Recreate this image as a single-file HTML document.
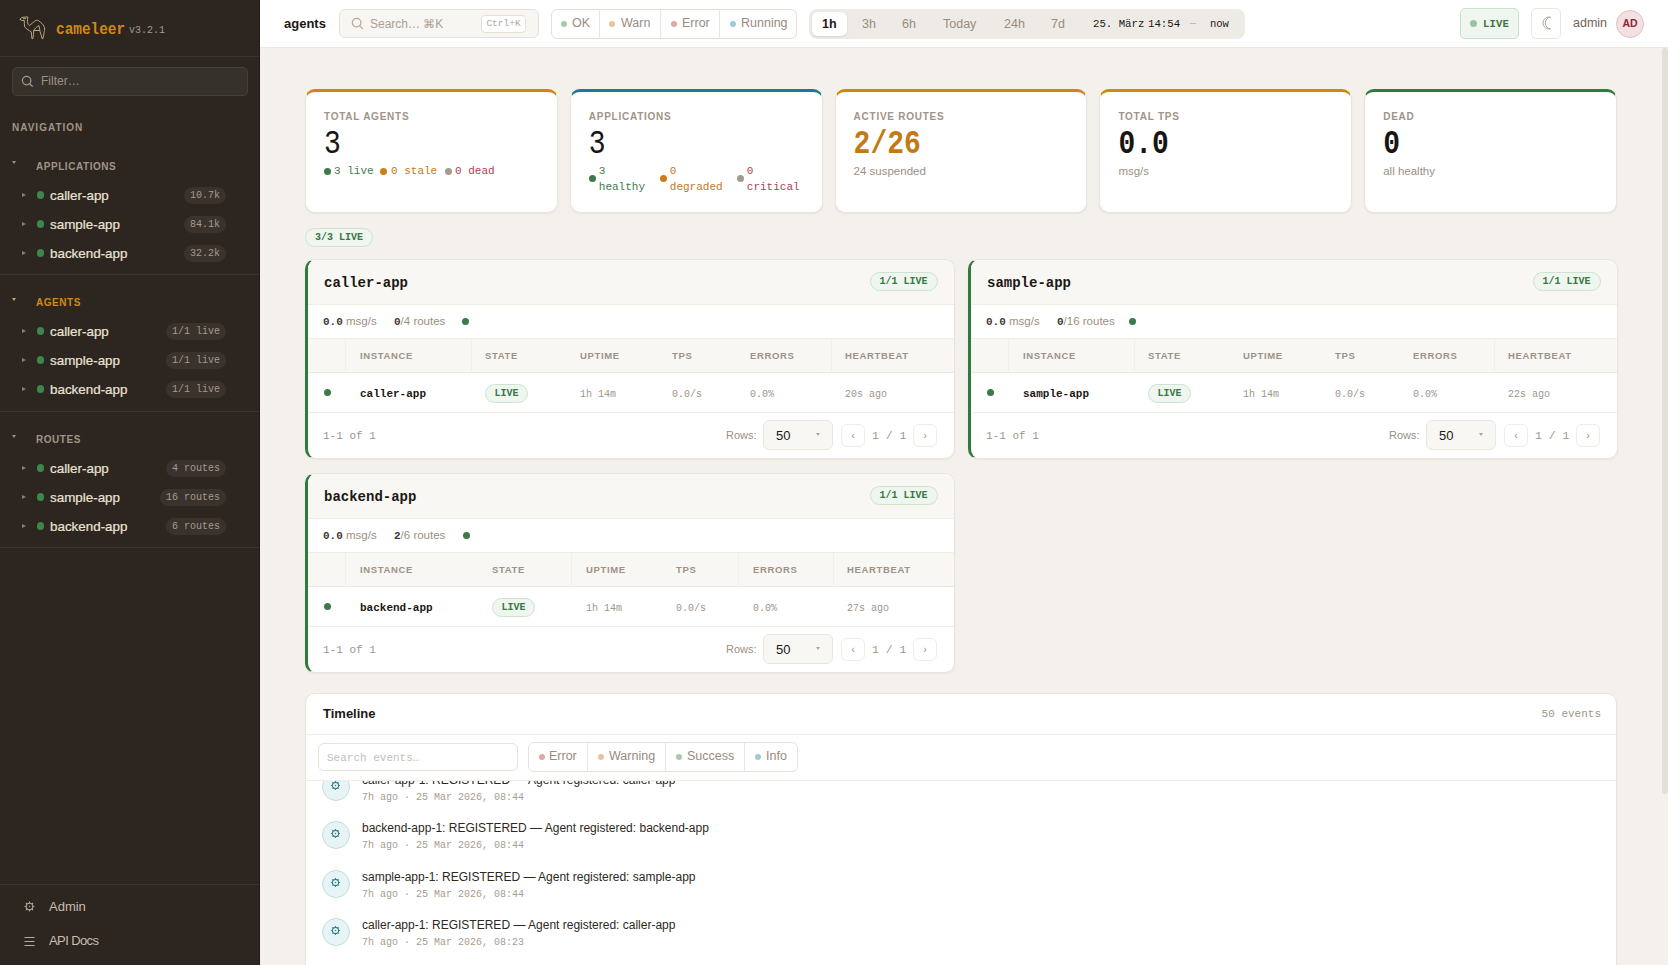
<!DOCTYPE html>
<html><head><meta charset="utf-8">
<style>
*{box-sizing:border-box;margin:0;padding:0}
html,body{width:1668px;height:965px;overflow:hidden;background:#f4f1ec;font-family:"Liberation Sans",sans-serif;color:#1c1714}
.mono{font-family:"Liberation Mono",monospace}
.abs{position:absolute}
/* sidebar */
#sb{position:absolute;left:0;top:0;width:260px;height:965px;background:#2c2520;border-right:1px solid #221c18}
.sep{position:absolute;left:0;width:259px;height:1px;background:#3b342e}
.sec{position:absolute;left:36px;font-size:10px;font-weight:bold;letter-spacing:0.55px;color:#a09487;line-height:12px}
.caret{position:absolute;left:12px;width:0;height:0;border-left:2px solid transparent;border-right:2px solid transparent;border-top:3px solid #9a8f84}
.item{position:absolute;left:0;width:259px;height:29px}
.item .tri{position:absolute;left:22px;top:12px;width:0;height:0;border-top:2.5px solid transparent;border-bottom:2.5px solid transparent;border-left:4px solid #8a7f75}
.item .dot{position:absolute;left:36.7px;top:10.3px;width:7.5px;height:7.5px;border-radius:50%;background:#3d874d}
.item .nm{position:absolute;left:50px;top:7px;font-size:13.4px;line-height:15px;color:#ece3d6;-webkit-text-stroke:0.2px #ece3d6}
.item .bd{position:absolute;right:33px;top:6px;height:17px;padding:0 6px;border-radius:9px;background:#3a322c;font-family:"Liberation Mono",monospace;font-size:10px;line-height:17px;color:#a49a8e}
/* topbar */
#tb{position:absolute;left:260px;top:0;width:1408px;height:48px;background:#fff;border-bottom:1px solid #ebe7e1}
/* content */
#ct{position:absolute;left:281px;top:69px;width:1361px;height:900px;border:1px solid #f3f0eb}
.kpi{position:absolute;top:89px;height:124px;width:252.8px;background:#fff;border:1px solid #e9e4dd;border-top:3px solid #cf850f;border-radius:10px;box-shadow:0 1px 2px rgba(60,40,20,.07)}
.kpi .bar{display:none}
.kpi .lab{position:absolute;left:18px;top:19px;font-size:10px;font-weight:bold;letter-spacing:0.75px;color:#a09488;line-height:12px}
.kpi .val{position:absolute;left:18px;top:39px;transform:scaleY(1.16);transform-origin:0 100%;font-family:"Liberation Mono",monospace;font-size:28px;font-weight:bold;line-height:32px;color:#1a1512}
.kpi .sub{position:absolute;left:18px;top:72px;font-size:11.5px;color:#9b9084;line-height:14px}

.grp{position:absolute;background:#fff;border:1px solid #e9e4dd;border-left:3px solid #2f7a3d;border-radius:10px;box-shadow:0 1px 2px rgba(60,40,20,.06);overflow:hidden}
.grp .hd{position:absolute;left:0;right:0;top:0;height:45px;background:#f9f7f4;border-bottom:1px solid #f0ece6}
.grp .ttl{position:absolute;left:16px;top:15px;font-family:"Liberation Mono",monospace;font-size:14px;font-weight:bold;line-height:16px;color:#1c1714}
.grp .lv{position:absolute;right:16px;top:12px;height:19px;width:68px;text-align:center;border:1px solid #cde3cf;background:#eff6ef;border-radius:10px;font-family:"Liberation Mono",monospace;font-size:10px;font-weight:bold;line-height:18px;color:#3a7845}
.grp .met{position:absolute;top:54px;font-size:11.5px;line-height:14px;color:#9b9084;white-space:pre}
.grp .met b{font-family:"Liberation Mono",monospace;font-weight:bold;color:#433b34;font-size:11px}
.grp .th{position:absolute;left:0;right:0;top:78px;height:35px;background:#f9f7f4;border-top:1px solid #f0ece6;border-bottom:1px solid #ebe7e1}
.grp .th span{position:absolute;top:11px;font-size:9.5px;font-weight:bold;letter-spacing:0.65px;color:#9d9286;line-height:12px}
.grp .th i{position:absolute;top:0;width:1px;height:34px;background:#f2efea}
.grp .tr{position:absolute;left:0;right:0;top:113px;height:40px;border-bottom:1px solid #f0ece6}
.grp .tr .d{position:absolute;left:16px;top:16px;width:7px;height:7px;border-radius:50%;background:#3c7a49}
.grp .tr .n{position:absolute;top:14px;font-family:"Liberation Mono",monospace;font-size:11px;font-weight:bold;line-height:14px;color:#1c1714}
.grp .tr .p{position:absolute;top:11px;height:19px;width:43px;border:1px solid #cde3cf;background:#eff6ef;border-radius:10px;font-family:"Liberation Mono",monospace;font-size:10px;font-weight:bold;line-height:17px;text-align:center;color:#3a7845}
.grp .tr .m{position:absolute;top:16px;font-family:"Liberation Mono",monospace;font-size:10px;line-height:12px;color:#a0968b}
.grp .ft{position:absolute;left:15px;top:169px;font-family:"Liberation Mono",monospace;font-size:11px;line-height:14px;color:#9f958a}
.grp .rows{position:absolute;top:168px;font-size:11px;line-height:14px;color:#9b9084}
.grp .sel{position:absolute;top:160px;width:70px;height:30px;background:#f9f7f4;border:1px solid #ebe6df;border-radius:6px}
.grp .sel span{position:absolute;left:12px;top:7px;font-size:13px;line-height:15px;color:#1c1714}
.grp .sel i{position:absolute;right:12px;top:12px;width:0;height:0;border-left:2px solid transparent;border-right:2px solid transparent;border-top:3px solid #b0a69b}
.grp .pb{position:absolute;top:164px;width:24px;height:23px;border:1px solid #f0ece6;border-radius:6px;background:#fff;font-size:11px;line-height:20px;text-align:center;color:#a0968b}
.grp .pg{position:absolute;top:169px;font-family:"Liberation Mono",monospace;font-size:11.5px;line-height:14px;color:#9f958a;white-space:pre}

.tl{position:absolute;left:305px;top:693px;width:1312px;height:290px;background:#fff;border:1px solid #e9e4dd;border-radius:10px;box-shadow:0 1px 2px rgba(60,40,20,.06);overflow:hidden}
.ev{position:absolute;left:0;width:1300px;height:48px}
.ev .ic{position:absolute;left:15.8px;top:0px;width:28px;height:28px;border-radius:50%;background:#e7f3f5;border:1px solid #bfdfe4}
.ev .ic svg{position:absolute;left:7.6px;top:6.2px}
.ev .t{position:absolute;left:56px;top:0px;font-size:12px;line-height:14px;color:#2e2823;white-space:pre}
.ev .mt{position:absolute;left:56px;top:19px;font-family:"Liberation Mono",monospace;font-size:10px;line-height:12px;color:#a89d90;white-space:pre}
</style></head><body>

<div id="sb">
  <svg class="abs" style="left:15px;top:10px" width="40" height="35" viewBox="0 0 40 35" fill="none" stroke="#c4ae7e" stroke-width="0.95" stroke-linejoin="round" stroke-linecap="round">
    <path d="M5.3 9.6 C5.4 8.3 6.4 7.4 7.8 7.3 L12.8 6.9 L12.5 9.8 C12.4 12 12.5 14.4 14.2 15.5 C16.2 14.6 19 11.2 21.2 10.3 C22.3 10 23.3 10.4 24.1 11.1 C26.1 12.7 28.1 14.3 29 16.3 C29.8 18.1 29.9 20 29.2 21.6 C28.9 23.6 28.7 26.2 27.9 28.6 L27 28.6 C26.5 26.4 25.9 24 25.1 21.8 C24.8 20 24.6 18 23.9 15.6 C22 16.6 19.6 18.6 18.8 20.6 C18.5 23.2 18.4 26 18 28.6 L16.9 28.6 C16.6 26.2 16.6 23.6 16.2 21.8 C14.3 20.5 11.3 19 9.7 17 C9.2 15 9.3 12.6 9.3 10.4 L6.9 10.5 C6.1 10.5 5.4 10.2 5.3 9.6 Z"/>
    <path d="M8.3 8.7 L10.6 8.6"/>
    <path d="M18.8 20.5 L24.6 20.5"/>
  </svg>
  <div class="abs mono" style="left:56px;top:20px;font-size:14.4px;font-weight:bold;color:#d28814;line-height:20px;transform:scaleY(1.14);transform-origin:0 70%">cameleer</div>
  <div class="abs mono" style="left:129px;top:24px;font-size:10px;color:#a39a8f;line-height:14px">v3.2.1</div>
  <div class="sep" style="top:56px"></div>

  <div class="abs" style="left:12px;top:67px;width:236px;height:29px;background:#37312b;border:1px solid #45403a;border-radius:5px"></div>
  <svg class="abs" style="left:21px;top:75px" width="13" height="13" viewBox="0 0 13 13" fill="none" stroke="#a09589" stroke-width="1.3"><circle cx="5.6" cy="5.6" r="4.2"/><path d="M8.7 8.7 L11.3 11.3" stroke-linecap="round"/></svg>
  <div class="abs" style="left:41px;top:74px;font-size:12px;line-height:14px;color:#9d9287">Filter…</div>
  <div class="abs" style="left:12px;top:123px;font-size:10px;font-weight:bold;letter-spacing:1px;color:#a09487;line-height:10px">NAVIGATION</div>

  <div class="caret" style="top:161px"></div>
  <div class="sec" style="top:161px">APPLICATIONS</div>
  <div class="item" style="top:181px"><i class="tri"></i><i class="dot"></i><span class="nm">caller-app</span><span class="bd">10.7k</span></div>
  <div class="item" style="top:210px"><i class="tri"></i><i class="dot"></i><span class="nm">sample-app</span><span class="bd">84.1k</span></div>
  <div class="item" style="top:239px"><i class="tri"></i><i class="dot"></i><span class="nm">backend-app</span><span class="bd">32.2k</span></div>
  <div class="sep" style="top:274px"></div>

  <div class="caret" style="top:298px;border-top-color:#c9a36a"></div>
  <div class="sec" style="top:297px;color:#d38a14">AGENTS</div>
  <div class="item" style="top:317px"><i class="tri"></i><i class="dot"></i><span class="nm">caller-app</span><span class="bd">1/1 live</span></div>
  <div class="item" style="top:346px"><i class="tri"></i><i class="dot"></i><span class="nm">sample-app</span><span class="bd">1/1 live</span></div>
  <div class="item" style="top:375px"><i class="tri"></i><i class="dot"></i><span class="nm">backend-app</span><span class="bd">1/1 live</span></div>
  <div class="sep" style="top:411px"></div>

  <div class="caret" style="top:435px"></div>
  <div class="sec" style="top:434px">ROUTES</div>
  <div class="item" style="top:454px"><i class="tri"></i><i class="dot"></i><span class="nm">caller-app</span><span class="bd">4 routes</span></div>
  <div class="item" style="top:483px"><i class="tri"></i><i class="dot"></i><span class="nm">sample-app</span><span class="bd">16 routes</span></div>
  <div class="item" style="top:512px"><i class="tri"></i><i class="dot"></i><span class="nm">backend-app</span><span class="bd">6 routes</span></div>
  <div class="sep" style="top:547px"></div>

  <div class="sep" style="top:884px"></div>
  <svg class="abs" style="left:24px;top:901px" width="11" height="11" viewBox="0 0 11 11" fill="none" stroke="#b5aa9d" stroke-width="1.1"><circle cx="5.5" cy="5.5" r="3.3"/><circle cx="5.5" cy="5.5" r="0.7" fill="#b5aa9d" stroke="none"/><path d="M5.5 0.6V1.9M5.5 9.1V10.4M0.6 5.5H1.9M9.1 5.5H10.4M2 2L2.9 2.9M8.1 8.1L9 9M2 9L2.9 8.1M8.1 2.9L9 2"/></svg>
  <div class="abs" style="left:49px;top:899px;font-size:13px;line-height:15px;color:#c9bdaf">Admin</div>
  <svg class="abs" style="left:24px;top:936px" width="11" height="11" viewBox="0 0 11 11" stroke="#b5aa9d" stroke-width="1.1"><path d="M0.5 1.5H10.5M0.5 5.5H10.5M0.5 9.5H10.5"/></svg>
  <div class="abs" style="left:49px;top:933px;font-size:13px;line-height:15px;color:#c9bdaf;letter-spacing:-0.6px">API Docs</div>
</div>

<div id="tb">
  <div class="abs" style="left:24px;top:16px;font-size:13px;font-weight:bold;line-height:16px;color:#1c1714">agents</div>
  <div class="abs" style="left:79px;top:9px;width:200px;height:29px;background:#f8f6f2;border:1px solid #e6e0d8;border-radius:6px"></div>
  <svg class="abs" style="left:91px;top:17px" width="13" height="13" viewBox="0 0 13 13" fill="none" stroke="#b3a89c" stroke-width="1.2"><circle cx="5.6" cy="5.6" r="4.3"/><path d="M8.8 8.8 L11.6 11.6" stroke-linecap="round"/></svg>
  <div class="abs" style="left:110px;top:17px;font-size:12px;line-height:15px;color:#aaa094">Search… &#8984;K</div>
  <div class="abs mono" style="left:221px;top:15px;width:45px;height:18px;border:1px solid #e6e0d8;border-radius:4px;background:#fff;font-size:9.5px;line-height:16px;text-align:center;color:#b1a79b">Ctrl+K</div>

  <div class="abs" style="left:291px;top:9px;width:246px;height:30px;border:1px solid #e6e0d8;border-radius:6px;background:#fff"></div>
  <div class="abs" style="left:339px;top:10px;width:1px;height:28px;background:#ebe6df"></div>
  <div class="abs" style="left:400px;top:10px;width:1px;height:28px;background:#ebe6df"></div>
  <div class="abs" style="left:459px;top:10px;width:1px;height:28px;background:#ebe6df"></div>
  <i class="abs" style="left:301px;top:20.5px;width:6px;height:6px;border-radius:50%;background:#a9c9a9"></i>
  <div class="abs" style="left:312px;top:16px;font-size:12.5px;line-height:15px;color:#978b7f">OK</div>
  <i class="abs" style="left:349px;top:20.5px;width:6px;height:6px;border-radius:50%;background:#e8c49a"></i>
  <div class="abs" style="left:361px;top:16px;font-size:12.5px;line-height:15px;color:#978b7f">Warn</div>
  <i class="abs" style="left:411px;top:20.5px;width:6px;height:6px;border-radius:50%;background:#e6a5a5"></i>
  <div class="abs" style="left:422px;top:16px;font-size:12.5px;line-height:15px;color:#978b7f">Error</div>
  <i class="abs" style="left:470px;top:20.5px;width:6px;height:6px;border-radius:50%;background:#9fcad6"></i>
  <div class="abs" style="left:481px;top:16px;font-size:12.5px;line-height:15px;color:#978b7f">Running</div>

  <div class="abs" style="left:549px;top:9px;width:436px;height:30px;background:#eeebe6;border-radius:8px"></div>
  <div class="abs" style="left:552px;top:12px;width:35px;height:24px;background:#fff;border-radius:6px;box-shadow:0 1px 2px rgba(60,40,20,.12)"></div>
  <div class="abs" style="left:562px;top:17px;font-size:12.5px;font-weight:bold;line-height:15px;color:#1c1714">1h</div>
  <div class="abs" style="left:602px;top:17px;font-size:12.5px;line-height:15px;color:#978b7f">3h</div>
  <div class="abs" style="left:642px;top:17px;font-size:12.5px;line-height:15px;color:#978b7f">6h</div>
  <div class="abs" style="left:683px;top:17px;font-size:12.5px;line-height:15px;color:#978b7f">Today</div>
  <div class="abs" style="left:744px;top:17px;font-size:12.5px;line-height:15px;color:#978b7f">24h</div>
  <div class="abs" style="left:791px;top:17px;font-size:12.5px;line-height:15px;color:#978b7f">7d</div>
  <div class="abs mono" style="left:833px;top:17px;font-size:10.7px;line-height:14px;color:#1c1714;white-space:pre">25. März</div>
  <div class="abs mono" style="left:888px;top:17px;font-size:10.7px;line-height:14px;color:#1c1714;white-space:pre">14:54</div>
  <div class="abs mono" style="left:930px;top:17px;font-size:10px;line-height:14px;color:#b9afa4">—</div>
  <div class="abs mono" style="left:950px;top:17px;font-size:10.5px;line-height:14px;color:#1c1714">now</div>

  <div class="abs" style="left:1200px;top:8px;width:59px;height:31px;background:#eff6ef;border:1px solid #c9e0cb;border-radius:5px"></div>
  <i class="abs" style="left:1210px;top:20px;width:7px;height:7px;border-radius:50%;background:#9cc3a0"></i>
  <div class="abs mono" style="left:1223px;top:17px;font-size:10.5px;font-weight:bold;line-height:14px;color:#3c7446;letter-spacing:0.2px">LIVE</div>
  <div class="abs" style="left:1271px;top:8px;width:30px;height:31px;background:#fff;border:1px solid #ebe6df;border-radius:5px"></div>
  <svg class="abs" style="left:1281px;top:16px" width="12" height="14" viewBox="0 0 12 14" fill="none" stroke="#a89d92" stroke-width="0.9"><path d="M9.5 1.2 A6 6 0 1 0 9.5 12.8 A5.2 5.8 0 0 1 9.5 1.2 Z"/></svg>
  <div class="abs" style="left:1313px;top:16px;font-size:12.5px;line-height:15px;color:#6e635a">admin</div>
  <div class="abs" style="left:1356px;top:10px;width:28px;height:28px;border-radius:50%;background:#f3e0e1;border:1px solid #e4bfc3;font-size:10.5px;font-weight:bold;line-height:25px;text-align:center;color:#8d2535">AD</div>
</div>
<div id="ct"></div>

<div class="kpi" style="left:305px"><div class="bar" style="background:#cf850f"></div>
  <div class="lab">TOTAL AGENTS</div><div class="val" style="font-weight:normal">3</div>
  <div class="abs mono" style="left:18px;top:72px;font-size:11px;line-height:14px;white-space:pre">
<i class="abs" style="left:0;top:4px;width:7px;height:7px;border-radius:50%;background:#3c7a49"></i><span class="abs" style="left:10px;top:0;color:#3f7a4b">3 live</span><i class="abs" style="left:56px;top:4px;width:7px;height:7px;border-radius:50%;background:#cd7d1a"></i><span class="abs" style="left:67px;top:0;color:#c07a1f">0 stale</span><i class="abs" style="left:121px;top:4px;width:7px;height:7px;border-radius:50%;background:#a39b92"></i><span class="abs" style="left:131px;top:0;color:#ad4254">0 dead</span>
  </div>
</div>
<div class="kpi" style="left:569.8px;border-top-color:#177e8c"><div class="bar"></div>
  <div class="lab">APPLICATIONS</div><div class="val" style="font-weight:normal">3</div>
  <div class="abs mono" style="left:18px;top:71px;font-size:11px;line-height:16px;white-space:pre;width:230px;height:40px">
<i class="abs" style="left:0;top:12px;width:7px;height:7px;border-radius:50%;background:#3c7a49"></i><span class="abs" style="left:10px;top:0;color:#3f7a4b">3<br>healthy</span><i class="abs" style="left:71px;top:12px;width:7px;height:7px;border-radius:50%;background:#cd7d1a"></i><span class="abs" style="left:81px;top:0;color:#c07a1f">0<br>degraded</span><i class="abs" style="left:148px;top:12px;width:7px;height:7px;border-radius:50%;background:#a39b92"></i><span class="abs" style="left:158px;top:0;color:#ad4254">0<br>critical</span>
  </div>
</div>
<div class="kpi" style="left:834.6px"><div class="bar" style="background:#cf850f"></div>
  <div class="lab">ACTIVE ROUTES</div><div class="val" style="color:#c27a16">2/26</div>
  <div class="sub">24 suspended</div>
</div>
<div class="kpi" style="left:1099.4px;border-top-color:#d0890f"><div class="bar"></div>
  <div class="lab">TOTAL TPS</div><div class="val">0.0</div>
  <div class="sub">msg/s</div>
</div>
<div class="kpi" style="left:1364.2px;border-top-color:#2f7a3d"><div class="bar"></div>
  <div class="lab">DEAD</div><div class="val">0</div>
  <div class="sub">all healthy</div>
</div>
<div class="grp" style="left:305px;top:259px;width:649.5px;height:200px">
  <div class="hd"><span class="ttl">caller-app</span><span class="lv">1/1 LIVE</span></div>
  <div class="met" style="left:15px"><b>0.0</b> msg/s</div>
  <div class="met" style="left:86px"><b>0</b>/4 routes</div>
  <i class="abs" style="left:154px;top:58px;width:7px;height:7px;border-radius:50%;background:#3c7a49"></i>
  <div class="th"><i style="left:37px"></i><i style="left:163px"></i><i style="left:523px"></i><span style="left:52px">INSTANCE</span><span style="left:177px">STATE</span><span style="left:272px">UPTIME</span><span style="left:364px">TPS</span><span style="left:442px">ERRORS</span><span style="left:537px">HEARTBEAT</span></div>
  <div class="tr"><i class="d"></i><span class="n" style="left:52px">caller-app</span><span class="p" style="left:177px">LIVE</span><span class="m" style="left:272px">1h 14m</span><span class="m" style="left:364px">0.0/s</span><span class="m" style="left:442px">0.0%</span><span class="m" style="left:537px">20s ago</span></div>
  <div class="ft">1-1 of 1</div>
  <div class="rows" style="left:418px">Rows:</div>
  <div class="sel" style="left:455px"><span>50</span><i></i></div>
  <div class="pb" style="left:533px">&#8249;</div>
  <div class="pg" style="left:564px">1 / 1</div>
  <div class="pb" style="left:605px">&#8250;</div>
</div>
<div class="grp" style="left:968px;top:259px;width:649.5px;height:200px">
  <div class="hd"><span class="ttl">sample-app</span><span class="lv">1/1 LIVE</span></div>
  <div class="met" style="left:15px"><b>0.0</b> msg/s</div>
  <div class="met" style="left:86px"><b>0</b>/16 routes</div>
  <i class="abs" style="left:158px;top:58px;width:7px;height:7px;border-radius:50%;background:#3c7a49"></i>
  <div class="th"><i style="left:37px"></i><i style="left:163px"></i><i style="left:523px"></i><span style="left:52px">INSTANCE</span><span style="left:177px">STATE</span><span style="left:272px">UPTIME</span><span style="left:364px">TPS</span><span style="left:442px">ERRORS</span><span style="left:537px">HEARTBEAT</span></div>
  <div class="tr"><i class="d"></i><span class="n" style="left:52px">sample-app</span><span class="p" style="left:177px">LIVE</span><span class="m" style="left:272px">1h 14m</span><span class="m" style="left:364px">0.0/s</span><span class="m" style="left:442px">0.0%</span><span class="m" style="left:537px">22s ago</span></div>
  <div class="ft">1-1 of 1</div>
  <div class="rows" style="left:418px">Rows:</div>
  <div class="sel" style="left:455px"><span>50</span><i></i></div>
  <div class="pb" style="left:533px">&#8249;</div>
  <div class="pg" style="left:564px">1 / 1</div>
  <div class="pb" style="left:605px">&#8250;</div>
</div>
<div class="grp" style="left:305px;top:473px;width:649.5px;height:200px">
  <div class="hd"><span class="ttl">backend-app</span><span class="lv">1/1 LIVE</span></div>
  <div class="met" style="left:15px"><b>0.0</b> msg/s</div>
  <div class="met" style="left:86px"><b>2</b>/6 routes</div>
  <i class="abs" style="left:155px;top:58px;width:7px;height:7px;border-radius:50%;background:#3c7a49"></i>
  <div class="th"><i style="left:37px"></i><i style="left:263px"></i><i style="left:430px"></i><i style="left:525px"></i><span style="left:52px">INSTANCE</span><span style="left:184px">STATE</span><span style="left:278px">UPTIME</span><span style="left:368px">TPS</span><span style="left:445px">ERRORS</span><span style="left:539px">HEARTBEAT</span></div>
  <div class="tr"><i class="d"></i><span class="n" style="left:52px">backend-app</span><span class="p" style="left:184px">LIVE</span><span class="m" style="left:278px">1h 14m</span><span class="m" style="left:368px">0.0/s</span><span class="m" style="left:445px">0.0%</span><span class="m" style="left:539px">27s ago</span></div>
  <div class="ft">1-1 of 1</div>
  <div class="rows" style="left:418px">Rows:</div>
  <div class="sel" style="left:455px"><span>50</span><i></i></div>
  <div class="pb" style="left:533px">&#8249;</div>
  <div class="pg" style="left:564px">1 / 1</div>
  <div class="pb" style="left:605px">&#8250;</div>
</div>
<div class="abs mono" style="left:305px;top:228px;width:68px;height:19px;border:1px solid #cde3cf;background:#eff6ef;border-radius:10px;font-size:10px;font-weight:bold;line-height:18px;text-align:center;color:#3a7845">3/3 LIVE</div>


<div class="tl">
  <div class="abs" style="left:17px;top:12px;font-size:13px;font-weight:bold;line-height:16px;color:#1c1714">Timeline</div>
  <div class="abs mono" style="right:15px;top:13px;font-size:11px;line-height:14px;color:#a0968b">50 events</div>
  <div class="abs" style="left:0;right:0;top:40px;height:1px;background:#f1ede8"></div>
  <div class="abs" style="left:12px;top:49px;width:200px;height:28px;border:1px solid #e8e2da;border-radius:6px;background:#fff"></div>
  <div class="abs mono" style="left:21px;top:57px;font-size:11px;line-height:14px;color:#c8beb3">Search events…</div>
  <div class="abs" style="left:222px;top:48px;width:270px;height:30px;border:1px solid #e8e2da;border-radius:6px;background:#fff"></div>
  <div class="abs" style="left:281px;top:49px;width:1px;height:28px;background:#ece7e0"></div>
  <div class="abs" style="left:359px;top:49px;width:1px;height:28px;background:#ece7e0"></div>
  <div class="abs" style="left:438px;top:49px;width:1px;height:28px;background:#ece7e0"></div>
  <i class="abs" style="left:233px;top:60px;width:6px;height:6px;border-radius:50%;background:#e6a5a5"></i>
  <div class="abs" style="left:243px;top:55px;font-size:12.5px;line-height:15px;color:#978b7f">Error</div>
  <i class="abs" style="left:292px;top:60px;width:6px;height:6px;border-radius:50%;background:#e8c49a"></i>
  <div class="abs" style="left:303px;top:55px;font-size:12.5px;line-height:15px;color:#978b7f">Warning</div>
  <i class="abs" style="left:370px;top:60px;width:6px;height:6px;border-radius:50%;background:#a9c9a9"></i>
  <div class="abs" style="left:381px;top:55px;font-size:12.5px;line-height:15px;color:#978b7f">Success</div>
  <i class="abs" style="left:449px;top:60px;width:6px;height:6px;border-radius:50%;background:#9fcad6"></i>
  <div class="abs" style="left:460px;top:55px;font-size:12.5px;line-height:15px;color:#978b7f">Info</div>
  <div class="abs" style="left:0;right:0;top:86px;height:250px;overflow:hidden;border-top:1px solid #f1ede8">
<div class="ev" style="top:-8px"><div class="ic"><svg width="11" height="11" viewBox="0 0 11 11" fill="none" stroke="#2f8593" stroke-width="1.15"><circle cx="5.5" cy="5.5" r="3.1"/><circle cx="5.5" cy="5.5" r="0.75" fill="#2f8593" stroke="none"/><path d="M5.5 1V2.2M5.5 8.8V10M1 5.5H2.2M8.8 5.5H10M2.3 2.3L3.1 3.1M7.9 7.9L8.7 8.7M2.3 8.7L3.1 7.9M7.9 3.1L8.7 2.3" stroke-width="1"/></svg></div><div class="t">caller-app-1: REGISTERED — Agent registered: caller-app</div><div class="mt">7h ago · 25 Mar 2026, 08:44</div></div><div class="ev" style="top:40px"><div class="ic"><svg width="11" height="11" viewBox="0 0 11 11" fill="none" stroke="#2f8593" stroke-width="1.15"><circle cx="5.5" cy="5.5" r="3.1"/><circle cx="5.5" cy="5.5" r="0.75" fill="#2f8593" stroke="none"/><path d="M5.5 1V2.2M5.5 8.8V10M1 5.5H2.2M8.8 5.5H10M2.3 2.3L3.1 3.1M7.9 7.9L8.7 8.7M2.3 8.7L3.1 7.9M7.9 3.1L8.7 2.3" stroke-width="1"/></svg></div><div class="t">backend-app-1: REGISTERED — Agent registered: backend-app</div><div class="mt">7h ago · 25 Mar 2026, 08:44</div></div><div class="ev" style="top:89px"><div class="ic"><svg width="11" height="11" viewBox="0 0 11 11" fill="none" stroke="#2f8593" stroke-width="1.15"><circle cx="5.5" cy="5.5" r="3.1"/><circle cx="5.5" cy="5.5" r="0.75" fill="#2f8593" stroke="none"/><path d="M5.5 1V2.2M5.5 8.8V10M1 5.5H2.2M8.8 5.5H10M2.3 2.3L3.1 3.1M7.9 7.9L8.7 8.7M2.3 8.7L3.1 7.9M7.9 3.1L8.7 2.3" stroke-width="1"/></svg></div><div class="t">sample-app-1: REGISTERED — Agent registered: sample-app</div><div class="mt">7h ago · 25 Mar 2026, 08:44</div></div><div class="ev" style="top:137px"><div class="ic"><svg width="11" height="11" viewBox="0 0 11 11" fill="none" stroke="#2f8593" stroke-width="1.15"><circle cx="5.5" cy="5.5" r="3.1"/><circle cx="5.5" cy="5.5" r="0.75" fill="#2f8593" stroke="none"/><path d="M5.5 1V2.2M5.5 8.8V10M1 5.5H2.2M8.8 5.5H10M2.3 2.3L3.1 3.1M7.9 7.9L8.7 8.7M2.3 8.7L3.1 7.9M7.9 3.1L8.7 2.3" stroke-width="1"/></svg></div><div class="t">caller-app-1: REGISTERED — Agent registered: caller-app</div><div class="mt">7h ago · 25 Mar 2026, 08:23</div></div>
  </div>
</div>
<div class="abs" style="left:1662px;top:48px;width:6px;height:746px;background:#e3dfd9;border-radius:3px"></div>
</body></html>
